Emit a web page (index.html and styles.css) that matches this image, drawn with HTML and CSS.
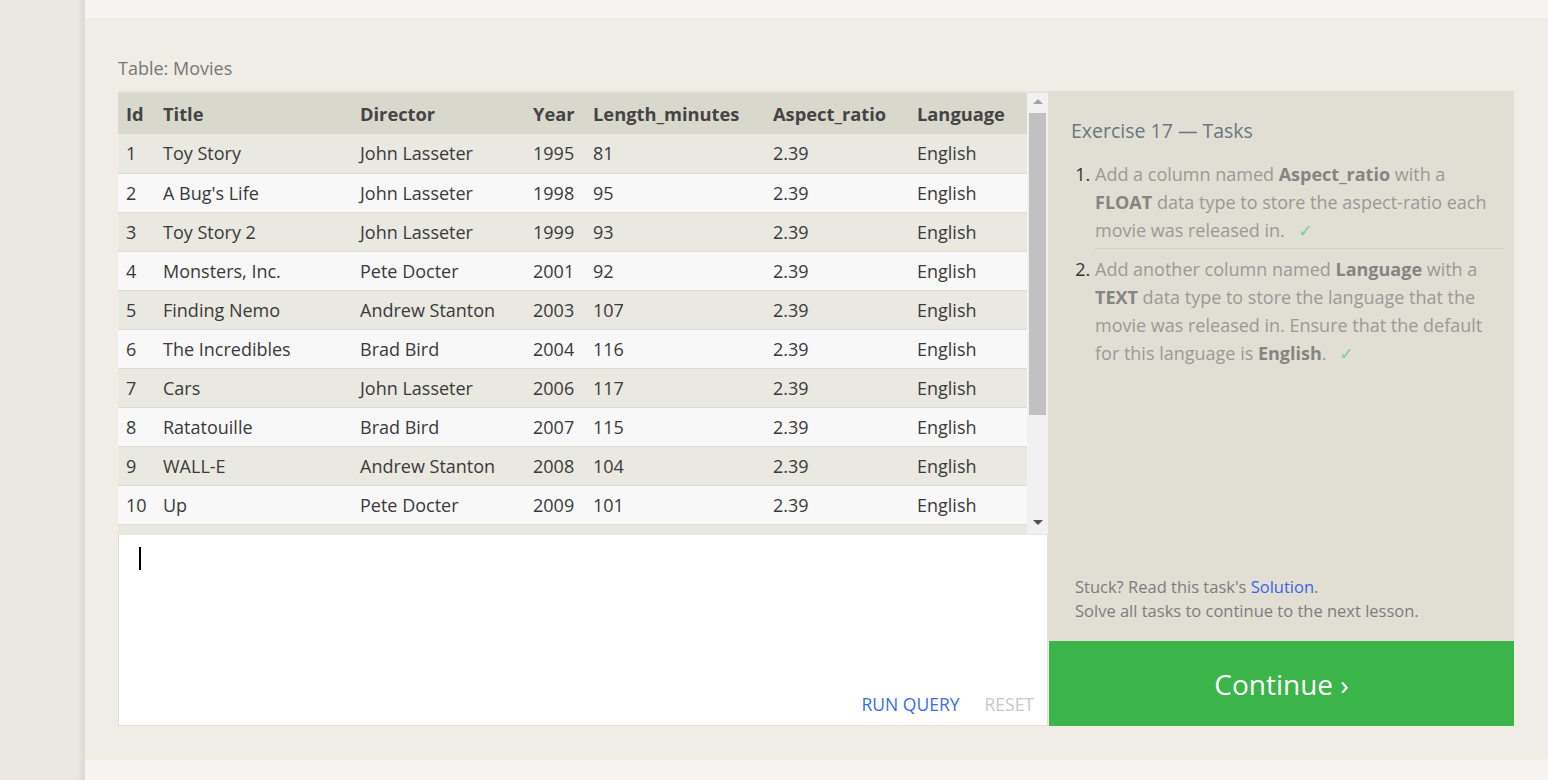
FILE: index.html
```html
<!DOCTYPE html>
<html>
<head>
<meta charset="utf-8">
<link rel="stylesheet" href="styles.css">
</head>
<body>
<div class="sidebar"></div>
<div class="main">
  <div class="panel">
    <div class="caption">Table: Movies</div>
    <div class="workspace">
      <div class="left">
        <div class="table-area">
          <div class="table-scroll">
            <table class="movies">
              <colgroup>
                <col class="c-id"><col class="c-title"><col class="c-dir"><col class="c-year"><col class="c-len"><col class="c-asp"><col class="c-lang">
              </colgroup>
              <thead>
                <tr><th>Id</th><th>Title</th><th>Director</th><th>Year</th><th>Length_minutes</th><th>Aspect_ratio</th><th>Language</th></tr>
              </thead>
              <tbody>
                <tr><td>1</td><td>Toy Story</td><td>John Lasseter</td><td>1995</td><td>81</td><td>2.39</td><td>English</td></tr>
                <tr><td>2</td><td>A Bug's Life</td><td>John Lasseter</td><td>1998</td><td>95</td><td>2.39</td><td>English</td></tr>
                <tr><td>3</td><td>Toy Story 2</td><td>John Lasseter</td><td>1999</td><td>93</td><td>2.39</td><td>English</td></tr>
                <tr><td>4</td><td>Monsters, Inc.</td><td>Pete Docter</td><td>2001</td><td>92</td><td>2.39</td><td>English</td></tr>
                <tr><td>5</td><td>Finding Nemo</td><td>Andrew Stanton</td><td>2003</td><td>107</td><td>2.39</td><td>English</td></tr>
                <tr><td>6</td><td>The Incredibles</td><td>Brad Bird</td><td>2004</td><td>116</td><td>2.39</td><td>English</td></tr>
                <tr><td>7</td><td>Cars</td><td>John Lasseter</td><td>2006</td><td>117</td><td>2.39</td><td>English</td></tr>
                <tr><td>8</td><td>Ratatouille</td><td>Brad Bird</td><td>2007</td><td>115</td><td>2.39</td><td>English</td></tr>
                <tr><td>9</td><td>WALL-E</td><td>Andrew Stanton</td><td>2008</td><td>104</td><td>2.39</td><td>English</td></tr>
                <tr><td>10</td><td>Up</td><td>Pete Docter</td><td>2009</td><td>101</td><td>2.39</td><td>English</td></tr>
              </tbody>
            </table>
          </div>
          <div class="scrollbar">
            <div class="arrow up"></div>
            <div class="thumb-track"><div class="thumb"></div></div>
            <div class="arrow down"></div>
          </div>
        </div>
        <div class="editor">
          <div class="caret"></div>
          <div class="editor-actions">
            <span class="run">RUN QUERY</span>
            <span class="reset">RESET</span>
          </div>
        </div>
      </div>
      <div class="right">
        <div class="tasks">
          <h2 class="tasks-title">Exercise 17 — Tasks</h2>
          <ol class="task-list">
            <li class="task">Add a column named <b>Aspect_ratio</b> with a <b>FLOAT</b> data type to store the aspect-ratio each movie was released in. <span class="check">✓</span></li>
            <li class="task">Add another column named <b>Language</b> with a <b>TEXT</b> data type to store the language that the movie was released in. Ensure that the default for this language is <b>English</b>. <span class="check">✓</span></li>
          </ol>
          <div class="help">
            <div>Stuck? Read this task's <a class="link">Solution</a>.</div>
            <div>Solve all tasks to continue to the next lesson.</div>
          </div>
        </div>
        <div class="continue">Continue ›</div>
      </div>
    </div>
  </div>
</div>
</body>
</html>
```

FILE: styles.css
```css
* { box-sizing: border-box; }
html, body { margin: 0; padding: 0; }
body {
  background: #f5f4f0;
  display: flex;
  height: 780px;
  overflow: hidden;
  font-family: "Open Sans", "Noto Sans", sans-serif;
  color: #3d3d3d;
}
.sidebar {
  width: 85px;
  flex: none;
  background: #ebe7e3;
  box-shadow: inset -7px 0 6px -4px rgba(0,0,0,0.08);
}
.main {
  flex: 1;
  padding-top: 18px;
}
.panel {
  background: #efede6;
  height: 742px;
  border-radius: 4px 0 6px 4px;
  padding: 38px 34px 34px 33px;
}
.caption {
  font-size: 18px;
  line-height: 24px;
  color: #777;
  margin-bottom: 11px;
}
.workspace {
  display: flex;
  height: 635px;
}
.left {
  width: 930px;
  flex: none;
  display: flex;
  flex-direction: column;
}
.table-area {
  height: 444px;
  display: flex;
  background: #e9e8e1;
  border-top: 2px solid #e4e2da;
}
.table-scroll {
  width: 909px;
  overflow: hidden;
}
.movies {
  border-collapse: collapse;
  table-layout: fixed;
  width: 909px;
  font-size: 18px;
}
.c-id { width: 37px; }
.c-title { width: 197px; }
.c-dir { width: 173px; }
.c-year { width: 60px; }
.c-len { width: 180px; }
.c-asp { width: 144px; }
.c-lang { width: 118px; }
.movies th {
  background: #d9d8cc;
  height: 41px;
  text-align: left;
  padding: 0 0 0 8px;
  font-weight: 700;
  font-size: 18.3px;
  color: #444;
  white-space: nowrap;
}
.movies td {
  height: 39px;
  padding: 0 0 0 8px;
  border-bottom: 1px solid #dddcd5;
  color: #3a3a3a;
  white-space: nowrap;
}
.movies tbody tr:nth-child(odd) td { background: #e9e8e1; }
.movies tbody tr:nth-child(even) td { background: #f8f8f8; }
.scrollbar {
  width: 21px;
  flex: none;
  background: #f1f1f1;
  display: flex;
  flex-direction: column;
  align-items: center;
  border-bottom: 1px solid #e6e5de;
}
.arrow {
  width: 0; height: 0;
  border-left: 5px solid transparent;
  border-right: 5px solid transparent;
  margin: 6px 0;
}
.arrow.up { border-bottom: 5px solid #a3a3a3; }
.arrow.down { border-top: 5px solid #505050; margin-bottom: 9px; }
.thumb-track { flex: 1; width: 100%; padding: 3px 2px 0 2px; }
.thumb { height: 302px; background: #c1c1c1; }
.editor {
  flex: 1;
  background: #fff;
  border: 1px solid #e2e0d8;
  border-top: none;
  display: flex;
  flex-direction: column;
  justify-content: space-between;
  padding: 12px 13px 10px 20px;
}
.caret {
  width: 2px;
  height: 23px;
  background: #000;
}
.editor-actions {
  display: flex;
  justify-content: flex-end;
  gap: 25px;
  font-size: 17.5px;
  line-height: 22px;
}
.run { color: #3a6fe2; }
.reset { color: #c9c9c9; }
.right {
  width: 466px;
  flex: none;
  display: flex;
  flex-direction: column;
}
.tasks {
  flex: 1;
  background: #e1dfd4;
  padding: 27px 10px 18px 23px;
  display: flex;
  flex-direction: column;
}
.tasks-title {
  margin: 0 0 16px 0;
  font-size: 19.5px;
  font-weight: 400;
  line-height: 26px;
  color: #6a7582;
}
.task-list {
  margin: 0;
  padding-left: 24px;
  font-size: 18px;
  line-height: 28px;
  color: #9a9a95;
}
.task-list li::marker { color: #333; }
.task-list b { color: #858580; }
.task { padding: 0 0 4px 0; }
.task + .task {
  border-top: 1px solid #d3d1c6;
  padding-top: 6px;
}
.check { color: #85cf91; margin-left: 8px; }
.help {
  margin-top: auto;
  font-size: 16.5px;
  line-height: 24px;
  color: #7d7d7a;
  padding-left: 4px;
}
.link { color: #3b63e6; }
.continue {
  height: 85px;
  margin-left: 1px;
  background: #3bb44a;
  color: #fff;
  font-size: 28px;
  display: flex;
  align-items: center;
  justify-content: center;
}
```
